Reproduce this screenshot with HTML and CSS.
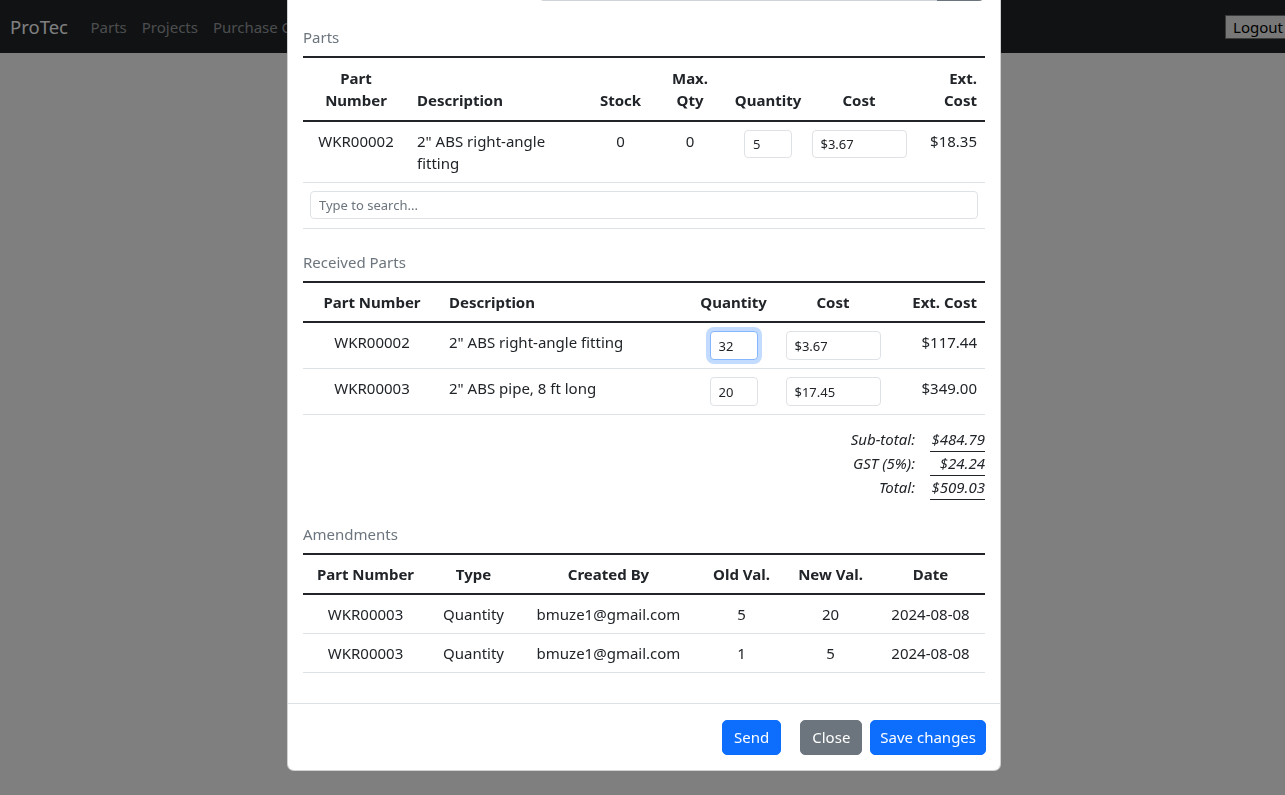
FILE: index.html
```html
<!DOCTYPE html>
<html lang="en">
<head>
<meta charset="utf-8">
<title>ProTec</title>
<link rel="stylesheet" href="styles.css">
</head>
<body>
<nav class="navbar">
  <span class="brand">ProTec</span>
  <div class="nav-links">
    <a class="nav-link">Parts</a>
    <a class="nav-link">Projects</a>
    <a class="nav-link">Purchase Orders</a>
  </div>
  <button class="logout">Logout</button>
</nav>

<div class="backdrop"></div>

<div class="modal-wrap">
  <div class="modal">
    <div class="modal-body">
      <div class="top-row">
        <div class="input-group">
          <div class="ig-input"></div>
          <div class="ig-btn"></div>
        </div>
      </div>

      <div class="section-title first">Parts</div>
      <table class="table parts">
        <colgroup>
          <col style="width:106px"><col style="width:183px"><col style="width:57px"><col style="width:82px"><col style="width:74px"><col style="width:108px"><col style="width:72px">
        </colgroup>
        <thead>
          <tr>
            <th class="c">Part<br>Number</th>
            <th class="l">Description</th>
            <th class="c">Stock</th>
            <th class="c">Max.<br>Qty</th>
            <th class="c">Quantity</th>
            <th class="c">Cost</th>
            <th class="r">Ext.<br>Cost</th>
          </tr>
        </thead>
        <tbody>
          <tr>
            <td class="c">WKR00002</td>
            <td class="l">2" ABS right-angle fitting</td>
            <td class="c">0</td>
            <td class="c">0</td>
            <td class="c"><input class="field qty" value="5"></td>
            <td class="c"><input class="field cost" value="$3.67"></td>
            <td class="r">$18.35</td>
          </tr>
          <tr>
            <td class="search-cell" colspan="7"><input class="field search" placeholder="Type to search..."></td>
          </tr>
        </tbody>
      </table>

      <div class="section-title">Received Parts</div>
      <table class="table received">
        <colgroup>
          <col style="width:138px"><col style="width:251px"><col style="width:83px"><col style="width:116px"><col style="width:94px">
        </colgroup>
        <thead>
          <tr>
            <th class="c">Part Number</th>
            <th class="l">Description</th>
            <th class="c">Quantity</th>
            <th class="c">Cost</th>
            <th class="r">Ext. Cost</th>
          </tr>
        </thead>
        <tbody>
          <tr>
            <td class="c">WKR00002</td>
            <td class="l">2" ABS right-angle fitting</td>
            <td class="c"><input class="field qty tall focused" value="32"></td>
            <td class="c"><input class="field cost tall" value="$3.67"></td>
            <td class="r">$117.44</td>
          </tr>
          <tr>
            <td class="c">WKR00003</td>
            <td class="l">2" ABS pipe, 8 ft long</td>
            <td class="c"><input class="field qty tall" value="20"></td>
            <td class="c"><input class="field cost tall" value="$17.45"></td>
            <td class="r">$349.00</td>
          </tr>
        </tbody>
      </table>

      <div class="totals">
        <span class="t-label">Sub-total:</span><span class="t-value">$484.79</span>
        <span class="t-label">GST (5%):</span><span class="t-value">$24.24</span>
        <span class="t-label">Total:</span><span class="t-value">$509.03</span>
      </div>

      <div class="section-title">Amendments</div>
      <table class="table amend">
        <colgroup>
          <col style="width:125px"><col style="width:91px"><col style="width:179px"><col style="width:87px"><col style="width:91px"><col style="width:109px">
        </colgroup>
        <thead>
          <tr>
            <th class="c">Part Number</th>
            <th class="c">Type</th>
            <th class="c">Created By</th>
            <th class="c">Old Val.</th>
            <th class="c">New Val.</th>
            <th class="c">Date</th>
          </tr>
        </thead>
        <tbody>
          <tr>
            <td class="c">WKR00003</td>
            <td class="c">Quantity</td>
            <td class="c">bmuze1@gmail.com</td>
            <td class="c">5</td>
            <td class="c">20</td>
            <td class="c">2024-08-08</td>
          </tr>
          <tr>
            <td class="c">WKR00003</td>
            <td class="c">Quantity</td>
            <td class="c">bmuze1@gmail.com</td>
            <td class="c">1</td>
            <td class="c">5</td>
            <td class="c">2024-08-08</td>
          </tr>
        </tbody>
      </table>
    </div>
    <div class="modal-footer">
      <button class="btn btn-primary send">Send</button>
      <button class="btn btn-secondary">Close</button>
      <button class="btn btn-primary save">Save changes</button>
    </div>
  </div>
</div>
</body>
</html>
```

FILE: styles.css
```css
* { box-sizing: border-box; }

html, body {
  margin: 0;
  height: 100%;
}

body {
  font-family: "Noto Sans", "Open Sans", sans-serif;
  font-size: 15px;
  line-height: 22px;
  color: #212529;
  background: #ffffff;
  overflow: hidden;
}

/* ---------- navbar ---------- */
.navbar {
  height: 53px;
  background: #212529;
  display: flex;
  align-items: center;
  padding-left: 10px;
}

.brand {
  color: #ffffff;
  font-size: 18.5px;
  line-height: 28px;
  margin-right: 15px;
}

.nav-links {
  display: flex;
  width: 204px;
  overflow: hidden;
}

.nav-link {
  color: rgba(255, 255, 255, 0.55);
  font-size: 15px;
  padding: 0 7.5px;
  white-space: nowrap;
}

.logout {
  margin-left: auto;
  font-family: "Noto Sans", "Open Sans", sans-serif;
  font-size: 15px;
  line-height: 20px;
  padding: 1px 2px 1px 7px;
  background: #efefef;
  color: #000;
  border: 1px solid #767676;
  border-right: none;
  border-radius: 0;
}

/* ---------- modal ---------- */
.backdrop {
  position: fixed;
  inset: 0;
  background: rgba(0, 0, 0, 0.5);
}

.modal-wrap {
  position: fixed;
  inset: 0;
  display: flex;
  flex-direction: column;
  justify-content: flex-end;
  align-items: flex-start;
  padding-left: 287px;
  padding-bottom: 24px;
  overflow: hidden;
}

.modal {
  width: 714px;
  flex-shrink: 0;
  background: #ffffff;
  border: 1px solid rgba(0, 0, 0, 0.175);
  border-top: none;
  border-radius: 0 0 7px 7px;
}

.modal-body {
  display: flex;
  flex-direction: column;
  padding: 16px 15px 15px 15px;
}

.top-row {
  display: flex;
  justify-content: flex-end;
  height: 40px;
}

.input-group {
  display: flex;
  width: 447px;
  height: 40px;
}

.ig-input {
  flex: 1;
  border: 1px solid #ced4da;
  border-right: none;
  border-radius: 6px 0 0 6px;
}

.ig-btn {
  width: 48px;
  background: #6c757d;
  border-radius: 0 6px 6px 0;
}

.section-title {
  color: #6c757d;
  line-height: 22px;
  margin: 8px 0 8px 0;
}

.section-title.first {
  margin-top: 25px;
}

/* ---------- tables ---------- */
.table {
  width: 682px;
  table-layout: fixed;
  border-collapse: collapse;
  border-top: 2px solid #212529;
  margin-bottom: 16px;
}

.table thead tr {
  border-bottom: 2px solid #212529;
}

.table th {
  font-weight: 700;
  padding: 8px 0;
  vertical-align: bottom;
  white-space: nowrap;
}

.table.parts th {
  padding: 9px 0;
}

.table td {
  padding: 8px 8px;
  vertical-align: top;
  border-bottom: 1px solid #dee2e6;
}

.table .c { text-align: center; }
.table .r { text-align: right; }
.table th.l, .table td.l { text-align: left; padding-left: 8px; padding-right: 8px; }
.table th.r, .table td.r { padding-right: 8px; }
.table td.c { padding-left: 0; padding-right: 0; }

.table.parts {
  margin-bottom: 14px;
}

.table.received {
  margin-bottom: 13px;
}

.table.amend {
  margin-bottom: 15px;
}

.field {
  font-family: "Noto Sans", "Open Sans", sans-serif;
  font-size: 13px;
  color: #212529;
  height: 28px;
  padding: 0 8px;
  border: 1px solid #dee2e6;
  border-radius: 4px;
  background: #fff;
  display: inline-block;
  vertical-align: top;
  outline: none;
}

.field.tall {
  height: 29px;
}

.field.qty { width: 48px; }
.field.cost { width: 95px; }

.field.focused {
  border-color: #86b7fe;
  box-shadow: 0 0 0 4px rgba(13, 110, 253, 0.25);
}

.search-cell {
  padding: 8px 7px 9px 7px !important;
}

.field.search {
  width: 100%;
}

.field::placeholder {
  color: #6c757d;
}

/* ---------- totals ---------- */
.totals {
  display: grid;
  grid-template-columns: auto 55px;
  column-gap: 15px;
  justify-content: end;
  margin-bottom: 15px;
  font-style: italic;
}

.t-label {
  text-align: right;
  line-height: 23px;
  padding-bottom: 1px;
}

.t-value {
  text-align: right;
  line-height: 23px;
  border-bottom: 1px solid #212529;
}

/* ---------- footer ---------- */
.modal-footer {
  display: flex;
  justify-content: flex-end;
  gap: 8px;
  border-top: 1px solid #dee2e6;
  padding: 16px 14px 15px 14px;
}

.btn {
  font-family: "Noto Sans", "Open Sans", sans-serif;
  font-size: 15px;
  line-height: 21px;
  height: 35px;
  padding: 6px 11px;
  border: 1px solid transparent;
  border-radius: 5px;
  color: #ffffff;
}

.btn-primary { background: #0d6efd; border-color: #0d6efd; }
.btn-secondary { background: #6c757d; border-color: #6c757d; }

.save { padding: 6px 9px; }
.send { margin-right: 11px; }
```
